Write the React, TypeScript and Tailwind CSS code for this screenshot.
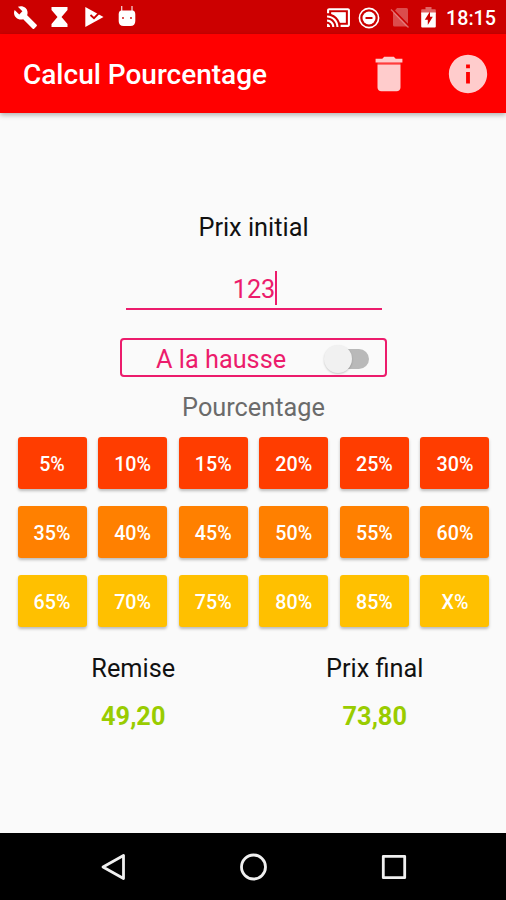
import React, { useState } from 'react';

const rows = [
  { color: 'bg-[#ff3d00]', values: ['5%', '10%', '15%', '20%', '25%', '30%'] },
  { color: 'bg-[#ff8000]', values: ['35%', '40%', '45%', '50%', '55%', '60%'] },
  { color: 'bg-[#ffc000]', values: ['65%', '70%', '75%', '80%', '85%', 'X%'] },
];

const StatusBar: React.FC = () => (
  <div className="flex h-[34px] shrink-0 items-center justify-between bg-[#cc0000] pl-[13px] pr-[10px] text-white">
    <div className="flex items-center">
      <svg className="h-[25px] w-[25px]" viewBox="0 0 24 24" fill="currentColor">
        <path d="M22.7 19l-9.1-9.1c.9-2.3.4-5-1.5-6.9-2-2-5-2.4-7.4-1.3L9 6 6 9 1.600 4.700C.4 7.100.9 10.100 2.900 12.100c1.900 1.900 4.600 2.400 6.900 1.500l9.100 9.100c.4.4 1 .4 1.400 0l2.300-2.300c.5-.4.5-1.100.1-1.400z" />
      </svg>
      <svg className="ml-[13px] h-[20px] w-[17px]" viewBox="0 0 17 20" fill="currentColor">
        <path d="M0.500 0h16v3L10.500 10l6 7v3h-16v-3l6-7-6-7z" />
      </svg>
      <svg className="ml-[17px] h-[20px] w-[19px]" viewBox="0 0 19 20">
        <path d="M0.300 0L18.500 10 0.300 20z" fill="currentColor" />
        <path d="M5.500 8l3.500 3.200L17 3" fill="none" stroke="#cc0000" strokeWidth="1.800" />
      </svg>
      <svg className="mb-[2px] ml-[14px] h-[21px] w-[18px]" viewBox="0 0 18 21">
        <path d="M3.700 0v6M14 0v6" stroke="#fff" strokeWidth="1.300" opacity="0.800" />
        <path d="M3 4.500h12q2.300.6 2.300 4V15q0 5-5 5H5.700q-5 0-5-5V8.500q0-3.400 2.300-4z" fill="currentColor" />
        <circle cx="5" cy="12" r="0.900" fill="#cc0000" />
        <circle cx="13" cy="12" r="0.900" fill="#cc0000" />
      </svg>
    </div>
    <div className="flex items-center">
      <svg className="h-[25px] w-[25px]" viewBox="0 0 24 24" fill="currentColor">
        <path d="M5 7h14v10h-5C13 13 9 9 5 8.600z" opacity="0.400" />
        <path d="M1 18v3h3c0-1.660-1.340-3-3-3zm0-4v2c2.760 0 5 2.240 5 5h2c0-3.870-3.130-7-7-7zm18-7H5v1.630c3.960 1.280 7.090 4.410 8.370 8.370H19V7zM1 10v2c4.970 0 9 4.030 9 9h2c0-6.080-4.930-11-11-11zm20-7H3c-1.100 0-2 .9-2 2v3h2V5h18v14h-7v2h7c1.100 0 2-.9 2-2V5c0-1.100-.9-2-2-2z" />
      </svg>
      <svg className="ml-[7px] mt-px h-[22px] w-[22px]" viewBox="0 0 22 22" fill="none">
        <circle cx="11" cy="11" r="9.600" stroke="#fff" strokeWidth="1.600" />
        <circle cx="11" cy="11" r="6.500" fill="#fff" />
        <path d="M7.500 11h7" stroke="#cc0000" strokeWidth="2" />
      </svg>
      <svg className="ml-[10px] h-[21px] w-[20px]" viewBox="0 0 20 21">
        <path d="M7 1h9.500q1.500 0 1.500 1.500V18.500q0 1-1 1H4.500q-1.500 0-1.500-1.500V6z" fill="#fff" opacity="0.300" />
        <path d="M1.500 1.500l17.500 18" stroke="#cc0000" strokeWidth="2.500" />
        <path d="M1 2.500l17.500 18" stroke="#fff" strokeWidth="1.300" opacity="0.400" />
      </svg>
      <svg className="ml-[11px] mt-px h-[21px] w-[15px]" viewBox="0 0 15 21">
        <path d="M1 2.300h3.500V0h6v2.300H14q.8 0 .8.800V7H.2V3.100q0-.8.8-.8z" fill="#fff" opacity="0.400" />
        <path d="M.2 5.500h14.600v14q0 1-1 1H1.200q-1 0-1-1z" fill="#fff" />
        <path d="M9 4.500L3.800 12.700h3V18l5-8.300H9z" fill="#cc0000" />
      </svg>
      <span className="ml-[10px] mt-[3px] text-[19.700px] font-medium leading-[34px]">18:15</span>
    </div>
  </div>
);

const AppBar: React.FC<{ onClear: () => void }> = ({ onClear }) => (
  <header className="z-10 flex h-[79px] shrink-0 items-center bg-[#ff0000] pl-[23px] pr-[15.500px] text-white shadow-[0_2px_5px_rgba(0,0,0,0.3)]">
    <h1 className="flex-1 pt-[2px] text-[28px] font-medium">Calcul Pourcentage</h1>
    <button onClick={onClear} aria-label="Effacer">
      <svg className="h-[46px] w-[46px] opacity-80" viewBox="0 0 24 24" fill="currentColor">
        <path d="M6 19c0 1.100.9 2 2 2h8c1.100 0 2-.9 2-2V7H6v12zM19 4h-3.500l-1-1h-5l-1 1H5v2h14V4z" />
        <path d="M6 6h12v1H6z" opacity="0.300" />
      </svg>
    </button>
    <button className="ml-[33px]" aria-label="Informations">
      <svg className="h-[46px] w-[46px] opacity-80" viewBox="0 0 24 24" fill="currentColor">
        <path d="M12 2C6.480 2 2 6.480 2 12s4.480 10 10 10 10-4.480 10-10S17.520 2 12 2zm1 15h-2v-6h2v6zm0-8h-2V7h2v2z" />
      </svg>
    </button>
  </header>
);

const NavBar: React.FC = () => (
  <nav className="flex h-[67px] shrink-0 items-center justify-between bg-black pl-[100px] pr-[99px]">
    <svg className="h-[28px] w-[26px]" viewBox="0 0 26 28" fill="none" stroke="#f0f0f0" strokeWidth="2.800" strokeLinejoin="round">
      <path d="M23.500 2.500v23L3 14z" />
    </svg>
    <svg className="h-[28px] w-[28px]" viewBox="0 0 28 28" fill="none" stroke="#f0f0f0" strokeWidth="2.800">
      <circle cx="13.500" cy="14" r="12" />
    </svg>
    <svg className="h-[26px] w-[26px]" viewBox="0 0 26 26" fill="none" stroke="#f0f0f0" strokeWidth="2.800" strokeLinejoin="round">
      <rect x="2.300" y="2.300" width="21.400" height="21.400" />
    </svg>
  </nav>
);

const App: React.FC = () => {
  const [price, setPrice] = useState('123');
  const [increase, setIncrease] = useState(false);
  const [percent, setPercent] = useState(40);

  const amount = ((Number(price) || 0) * percent) / 100;
  const total = (Number(price) || 0) + (increase ? amount : -amount);
  const format = (n: number) => n.toFixed(2).replace('.', ',');

  const handlePercent = (label: string) => {
    const value = parseInt(label, 10);
    if (!isNaN(value)) {
      setPercent(value);
    }
  };

  return (
    <div className="flex h-[900px] w-[506px] flex-col overflow-hidden bg-[#fafafa] font-[Roboto,sans-serif]">
      <StatusBar />
      <AppBar onClear={() => setPrice('')} />

      <main className="flex flex-1 flex-col items-center pl-px pt-[100px]">
        <h2 className="text-[25.300px] leading-[30px] text-[#111]">Prix initial</h2>
        <div className="mt-[27px] flex h-[40px] w-[256px] items-start justify-center border-b-2 border-[#ec1c6c] pl-[3px]">
          <span className="text-[25.300px] leading-[40px] text-[#ec1c6c]">{price}</span>
          <span className="mt-px h-[34px] w-[2px] bg-[#ec1c6c]" />
        </div>

        <button
          onClick={() => setIncrease(!increase)}
          className="mt-[28px] flex h-[39px] w-[267px] items-center rounded-[4px] border-2 border-[#ec1c6c] pl-[34px] text-[25.300px] text-[#ec1c6c]"
        >
          <span className="pt-[4px] leading-[34px]">A la hausse</span>
          <span className="ml-auto mr-[16px] mt-[3px] flex h-[20px] w-[45px] items-center rounded-full bg-linear-to-r from-transparent from-30% to-[#b9b9b9] to-30%">
            <span
              className={`h-[28px] w-[28px] shrink-0 rounded-full bg-[#f1f1f1] shadow-[0_1px_2px_rgba(0,0,0,0.2)] ${increase ? 'ml-auto' : ''}`}
            />
          </span>
        </button>

        <h3 className="mt-[16px] text-[25.300px] leading-[30px] text-[#6b6b6b]">Pourcentage</h3>

        <div className="mt-[14px] flex flex-col gap-[17px]">
          {rows.map((row) => (
            <div key={row.color} className="flex gap-[11.600px]">
              {row.values.map((value) => (
                <button
                  key={value}
                  onClick={() => handlePercent(value)}
                  className={`h-[52px] w-[69px] rounded-[3px] pt-[3px] text-[19.700px] font-medium text-white shadow-[0_2px_3px_rgba(0,0,0,0.25)] ${row.color}`}
                >
                  {value}
                </button>
              ))}
            </div>
          ))}
        </div>

        <div className="mt-[27px] grid w-[484px] grid-cols-2 pl-px text-center text-[25.300px] leading-[30px] text-[#111]">
          <div>
            <p>Remise</p>
            <p className="mt-[18px] font-bold text-[#99cc00]">{format(amount)}</p>
          </div>
          <div>
            <p>Prix final</p>
            <p className="mt-[18px] font-bold text-[#99cc00]">{format(total)}</p>
          </div>
        </div>
      </main>

      <NavBar />
    </div>
  );
};

export default App;
